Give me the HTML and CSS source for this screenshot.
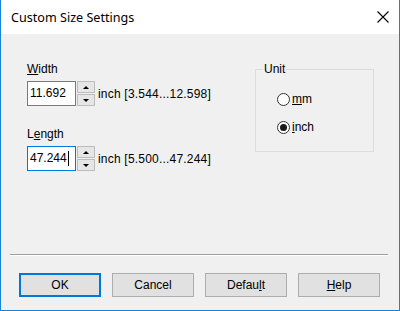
FILE: index.html
```html
<!DOCTYPE html>
<html lang="en">
<head>
    <meta charset="UTF-8">
    <title>Custom Size Settings</title>
    <link rel="stylesheet" href="styles.css">
</head>
<body>
<div class="window">
    <div class="titlebar">
        <span class="title">Custom Size Settings</span>
        <svg class="close" width="12" height="12" viewBox="0 0 12 12">
            <path d="M0.5 0.5 L11.5 11.5 M11.5 0.5 L0.5 11.5" stroke="#000" stroke-width="1.1" fill="none"/>
        </svg>
    </div>
    <div class="client">
        <div class="main">
            <div class="fields">
                <div class="field">
                    <div class="label"><u>W</u>idth</div>
                    <div class="row">
                        <div class="input">11.692</div>
                        <div class="spin">
                            <span class="spin-btn up"></span>
                            <span class="spin-btn down"></span>
                        </div>
                        <span class="range">inch [3.544...12.598]</span>
                    </div>
                </div>
                <div class="field second">
                    <div class="label">L<u>e</u>ngth</div>
                    <div class="row">
                        <div class="input focused">47.244<span class="caret"></span></div>
                        <div class="spin">
                            <span class="spin-btn up"></span>
                            <span class="spin-btn down"></span>
                        </div>
                        <span class="range">inch [5.500...47.244]</span>
                    </div>
                </div>
            </div>
            <div class="group">
                <span class="group-title">Unit</span>
                <div class="radio">
                    <span class="circle"></span>
                    <span><u>m</u>m</span>
                </div>
                <div class="radio checked">
                    <span class="circle"></span>
                    <span><u>i</u>nch</span>
                </div>
            </div>
        </div>
        <div class="separator"></div>
        <div class="buttons">
            <div class="btn default">OK</div>
            <div class="btn">Cancel</div>
            <div class="btn">Defau<u>l</u>t</div>
            <div class="btn"><u>H</u>elp</div>
        </div>
    </div>
</div>
</body>
</html>
```

FILE: styles.css
```css
body {
    margin: 0;
    font-family: "Liberation Sans", Arial, sans-serif;
    font-size: 12px;
    color: #000;
}
.window {
    width: 400px;
    height: 311px;
    box-sizing: border-box;
    border: 1px solid #1883d7;
    border-top: none;
    background: #f0f0f0;
    display: flex;
    flex-direction: column;
}
.titlebar {
    height: 34px;
    flex-shrink: 0;
    background: #fff;
    display: flex;
    align-items: center;
    padding: 0 10px;
}
.title {
    font-family: "Noto Sans", "Open Sans", sans-serif;
    font-size: 12.6px;
}
.close {
    margin-left: auto;
}
.client {
    flex: 1;
    display: flex;
    flex-direction: column;
}
.main {
    height: 220px;
    box-sizing: border-box;
    display: flex;
    padding: 28px 25px 0 26px;
}
.fields {
    display: flex;
    flex-direction: column;
}
.field.second {
    margin-top: 21px;
}
.label {
    line-height: 14px;
    height: 14px;
}
.row {
    display: flex;
    align-items: center;
    margin-top: 5px;
}
.input {
    width: 49px;
    height: 25px;
    box-sizing: border-box;
    border: 1px solid #7a7a7a;
    background: #fff;
    padding-left: 2px;
    line-height: 23px;
    display: flex;
    align-items: center;
}
.input.focused {
    border-color: #0078d7;
}
.caret {
    width: 1px;
    height: 15px;
    background: #000;
    margin-left: 1px;
}
.spin {
    display: flex;
    flex-direction: column;
    gap: 1px;
    margin-left: 1px;
}
.spin-btn {
    width: 18px;
    height: 12px;
    box-sizing: border-box;
    border: 1px solid #bcbcbc;
    background: #e6e6e6;
    display: flex;
    align-items: center;
    justify-content: center;
}
.spin-btn::after {
    content: "";
    border-left: 3px solid transparent;
    border-right: 3px solid transparent;
}
.spin-btn.up::after {
    border-bottom: 3px solid #000;
}
.spin-btn.down::after {
    border-top: 3px solid #000;
}
.range {
    margin-left: 3px;
    letter-spacing: 0.2px;
}
.group {
    position: relative;
    margin-left: auto;
    margin-top: 7px;
    width: 119px;
    height: 83px;
    box-sizing: border-box;
    border: 1px solid #dcdcdc;
    padding: 21px 0 0 21px;
}
.group-title {
    position: absolute;
    top: -8px;
    left: 7px;
    padding: 0 1px;
    line-height: 14px;
    background: #f0f0f0;
}
.radio {
    display: flex;
    align-items: center;
    height: 16px;
    gap: 2px;
}
.radio + .radio {
    margin-top: 12px;
}
.circle {
    width: 13px;
    height: 13px;
    box-sizing: border-box;
    border: 1px solid #333;
    border-radius: 50%;
    background: #fff;
    display: flex;
    align-items: center;
    justify-content: center;
}
.radio.checked .circle::after {
    content: "";
    width: 7px;
    height: 7px;
    border-radius: 50%;
    background: #1a1a1a;
}
.separator {
    border-top: 1px solid #a0a0a0;
    border-bottom: 1px solid #fff;
    margin: 0 11px 0 9px;
}
.buttons {
    display: flex;
    gap: 11px;
    padding: 17px 0 0 18px;
}
.btn {
    width: 82px;
    height: 24px;
    box-sizing: border-box;
    border: 1px solid #adadad;
    background: #e1e1e1;
    display: flex;
    align-items: center;
    justify-content: center;
}
.btn.default {
    border: 2px solid #0078d7;
}
```
